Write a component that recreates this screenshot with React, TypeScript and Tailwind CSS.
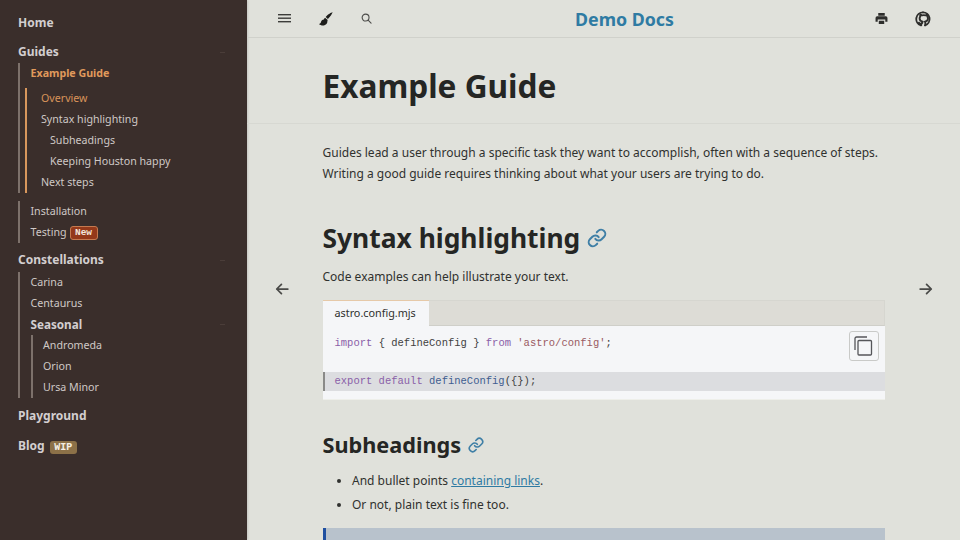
import React from "react";

const Caret = () => <span className="ml-auto mr-[22px] h-px w-[5px] bg-[#4a3d39]" />;

const Link = ({ children, cls = "" }: { children: React.ReactNode; cls?: string }) => (
  <a className={`block h-[21px] text-[10.67px] leading-[20px] text-[#cfc9c6] ${cls}`}>{children}</a>
);

const Chain = ({ size }: { size: number }) => (
  <svg width={size} height={size} viewBox="0 0 24 24" fill="none" stroke="#3f7fa6" strokeWidth="2.4" strokeLinecap="round" strokeLinejoin="round" className="shrink-0">
    <path d="M10 13a5 5 0 0 0 7.54.54l3-3a5 5 0 0 0-7.07-7.07l-1.72 1.71" />
    <path d="M14 11a5 5 0 0 0-7.54-.54l-3 3a5 5 0 0 0 7.07 7.07l1.71-1.71" />
  </svg>
);

const Arrow = ({ left }: { left?: boolean }) => (
  <svg width="14" height="14" viewBox="0 0 24 24" fill="none" stroke="#4a4a48" strokeWidth="3" strokeLinecap="round" strokeLinejoin="round" className={left ? "rotate-180" : ""}>
    <path d="M2 12h19M13 4l8 8-8 8" />
  </svg>
);

export default function App() {
  return (
    <div className="flex h-[540px] w-[960px] overflow-hidden bg-[#e0e1db] font-['Noto_Sans',sans-serif] text-[#252624]">
      <aside className="flex h-full w-[247px] shrink-0 flex-col bg-[#3a2e2b] pl-[18px] pt-[13px] shadow-[1px_0_2px_rgba(0,0,0,0.12)]">
        <div className="text-[12px] font-bold leading-[20px] text-[#d3ced0]">Home</div>
        <div className="mt-[9px] flex h-[20px] items-center text-[12px] font-bold leading-[20px] text-[#d3ced0]">Guides<Caret /></div>
        <div className="mt-[1px] border-l-2 border-[#7d716b] pl-[10.500px]">
          <div className="text-[10.67px] font-bold leading-[20px] text-[#e09a5c]">Example Guide</div>
          <div className="ml-[-5.500px] mt-[4.500px] border-l-2 border-[#d8975c] pl-[14px]">
            <Link cls="!text-[#d9945a]">Overview</Link>
            <Link>Syntax highlighting</Link>
            <Link cls="ml-[9px]">Subheadings</Link>
            <Link cls="ml-[9px]">Keeping Houston happy</Link>
            <Link>Next steps</Link>
          </div>
        </div>
        <div className="mt-[8.500px] border-l-2 border-[#7d716b] pl-[10.500px]">
          <Link>Installation</Link>
          <div className="flex h-[21px] items-start">
            <span className="text-[10.67px] leading-[20px] text-[#cfc9c6]">Testing</span>
            <span className="ml-[3px] mt-[4px] flex h-[14px] w-[28px] items-center justify-center rounded-[3px] border border-[#c47a50] bg-[#94391a] font-['Liberation_Mono',monospace] text-[9.500px] font-bold leading-[12px] text-[#f3e6dc]">New</span>
          </div>
        </div>
        <div className="mt-[7px] flex h-[20px] items-center text-[12px] font-bold leading-[20px] text-[#d3ced0]">Constellations<Caret /></div>
        <div className="mt-[1.500px] border-l-2 border-[#7d716b] pl-[10.500px]">
          <Link>Carina</Link>
          <Link>Centaurus</Link>
          <div className="flex h-[21.500px] items-center text-[11.700px] font-bold leading-[20px] text-[#d3ced0]">Seasonal<Caret /></div>
          <div className="border-l-2 border-[#7d716b] pl-[10.500px]">
            <Link>Andromeda</Link>
            <Link>Orion</Link>
            <Link>Ursa Minor</Link>
          </div>
        </div>
        <div className="mt-[8px] text-[12px] font-bold leading-[20px] text-[#d3ced0]">Playground</div>
        <div className="mt-[10px] flex h-[20px] items-center text-[12px] font-bold leading-[20px] text-[#d3ced0]">
          Blog
          <span className="ml-[5px] mt-[3px] flex h-[13px] w-[27px] items-center justify-center rounded-[3px] bg-[#8c7148] font-['Liberation_Mono',monospace] text-[10px] font-bold leading-[13px] text-[#f5efe4]">WIP</span>
        </div>
      </aside>

      <main className="flex min-w-0 flex-1 flex-col overflow-hidden">
        <header className="flex h-[38px] shrink-0 items-center border-b border-[#d0d1cb] pl-[31px] pr-[29px]">
          <svg width="13" height="9" viewBox="0 0 13 9" fill="#3c3c3a"><rect y="0" width="13" height="1.400" /><rect y="3.500" width="13" height="1.400" /><rect y="7" width="13" height="1.400" /></svg>
          <svg width="14" height="14" viewBox="0 0 14 14" fill="#1e1e1c" className="ml-[28px]"><path d="M13.300.3c-.9.2-4.300 2-6.600 4.600l2.200 2.100C11.500 4.800 13.200 1.500 13.500.6c.1-.2 0-.3-.2-.3zM6.100 5.700C5.500 6.100 5 7 4.800 7.500 3.400 7.500 2.300 8.500 2 10c-.2 1-1 1.800-2 2 1.200 1.200 3 1.700 5 1.400 2-.4 3.500-2 3.400-4.100 0-.4.100-.9.300-1.300z" /></svg>
          <svg width="11" height="11" viewBox="0 0 24 24" fill="none" stroke="#4c4c4a" strokeWidth="2.400" strokeLinecap="round" className="ml-[28px]"><circle cx="10" cy="10" r="7.500" /><path d="M15.500 15.500L22 22" /></svg>
          <div className="ml-[203px] text-[17.800px] font-bold leading-[24px] text-[#2f7ba3]">Demo Docs</div>
          <svg width="13" height="13" viewBox="0 0 24 24" fill="#2e2e2c" className="ml-auto mr-[1px]"><path d="M6 2h12v5H6zM4 8h16a3 3 0 0 1 3 3v7h-4v-4H5v4H1v-7a3 3 0 0 1 3-3zM7 16h10v6H7z" /></svg>
          <svg width="16" height="16" viewBox="0 0 24 24" fill="none" stroke="#2e2e2c" strokeWidth="2.800" strokeLinecap="round" strokeLinejoin="round" className="ml-[26px]"><path d="M12 2a10 10 0 0 0-3.200 19.500c.5.1.7-.2.7-.5v-2.200c-2.800.6-3.400-1.200-3.400-1.200M15 21.500c.300 0 .5-.3.5-.5v-3c0-1-.3-1.600-.7-2 2.300-.3 4.700-1.100 4.700-5 0-1.100-.4-2-1-2.700.1-.3.400-1.300-.1-2.700 0 0-.8-.3-2.700 1a9.400 9.400 0 0 0-5 0c-1.900-1.300-2.700-1-2.700-1-.5 1.400-.2 2.400-.1 2.700-.6.700-1 1.600-1 2.700 0 3.900 2.400 4.700 4.700 5-.4.400-.7 1-.7 2" /><path d="M15 21.500A10 10 0 0 0 12 2" /></svg>
        </header>

        <div className="flex min-h-0 flex-1">
          <div className="flex w-[75.500px] shrink-0 items-center pl-[28px]"><Arrow left /></div>
          <div className="w-[562.500px] shrink-0">
            <h1 className="mt-[24px] h-[61px] text-[31.600px] font-bold leading-[48px] text-[#252624]">Example Guide</h1>
            <div className="ml-[-76px] w-[714px] border-t border-[#d7d8d2]" />
            <p className="mt-[18px] text-[12px] leading-[21px] text-[#30312f]">
              Guides lead a user through a specific task they want to accomplish, often with a sequence of steps. Writing a good guide requires thinking about what your users are trying to do.
            </p>
            <h2 className="mt-[34px] flex h-[40px] items-center gap-[7px] text-[26.400px] font-bold leading-[40px] text-[#252624]">
              Syntax highlighting <Chain size={20} />
            </h2>
            <p className="mt-[8px] text-[12px] leading-[21px] text-[#30312f]">Code examples can help illustrate your text.</p>
            <div className="mt-[13px] w-[562px] border-b border-[#eeefea]">
              <div className="flex h-[26px] border border-b-[#cfcfc9] border-[#d6d6d0] bg-[#dddcd6]">
                <div className="ml-[-1px] mt-[-1px] flex h-[26px] w-[106px] items-center border-t border-[#e6c9a8] bg-[#f5f6f8] pl-[12px] text-[10.800px] text-[#2f302e]">astro.config.mjs</div>
              </div>
              <div className="relative h-[73px] bg-[#f5f6f8] pt-[8px] font-['Liberation_Mono',monospace] text-[10.500px]">
                <div className="h-[19px] pl-[12px] leading-[19px] text-[#3f3f3f]">
                  <span className="text-[#8a5fa8]">import</span> {"{"} defineConfig {"}"} <span className="text-[#8a5fa8]">from</span> <span className="text-[#9a5a62]">'astro/config'</span>;
                </div>
                <div className="h-[19px]" />
                <div className="h-[19px] border-l-2 border-[#8a8a88] bg-[#dcdde0] pl-[10px] leading-[19px] text-[#3f3f3f]">
                  <span className="text-[#8a5fa8]">export default</span> <span className="text-[#3f5e90]">defineConfig</span>({"{}"});
                </div>
                <button className="absolute right-[6px] top-[5px] flex h-[30px] w-[30px] items-center justify-center rounded-[3px] border border-[#c9cac8] bg-[#f5f6f8]">
                  <svg width="19" height="20" viewBox="0 0 19 20" fill="none" stroke="#55565a" strokeWidth="1.300"><rect x="4" y="4.500" width="13.500" height="14.500" rx="1" /><path d="M1 14V2.500A1.500 1.500 0 0 1 2.500 1H13" /></svg>
                </button>
              </div>
            </div>
            <h3 className="mt-[27px] flex h-[36px] items-center gap-[7px] text-[21.700px] font-bold leading-[36px] text-[#252624]">
              Subheadings <Chain size={16} />
            </h3>
            <ul className="mt-[6px] list-disc pl-[29.500px] text-[12px] text-[#30312f]">
              <li className="h-[24px] leading-[24px]">And bullet points <a className="text-[#2f7ba3] underline">containing links</a>.</li>
              <li className="h-[24px] leading-[24px]">Or not, plain text is fine too.</li>
            </ul>
            <div className="mt-[11px] h-[60px] border-l-[3px] border-[#1f4fa0] bg-[#b8c2cc]" />
          </div>
          <div className="flex flex-1 items-center pl-[34px]"><Arrow /></div>
        </div>
      </main>
    </div>
  );
}
